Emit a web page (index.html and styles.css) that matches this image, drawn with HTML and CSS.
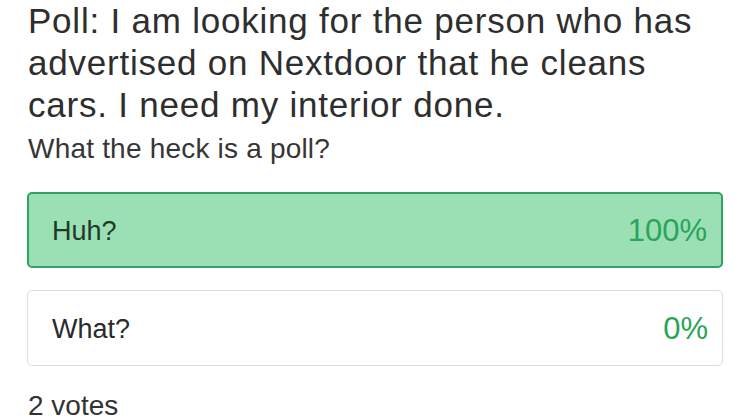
FILE: index.html
```html
<!DOCTYPE html>
<html lang="en">

<head>
    <meta charset="UTF-8">
    <meta name="viewport" content="width=device-width, initial-scale=1.0">
    <title>Poll</title>
    <link rel="stylesheet" href="styles.css">
</head>

<body>

    <div class="poll">
        <h1 class="poll-title">Poll: I am looking for the person who has advertised on Nextdoor that he cleans cars. I need my interior done.</h1>
        <p class="poll-question">What the heck is a poll?</p>

        <div class="option winner">
            <span class="option-label">Huh?</span>
            <span class="option-percent">100%</span>
        </div>
        <div class="option">
            <span class="option-label">What?</span>
            <span class="option-percent">0%</span>
        </div>

        <p class="poll-votes">2 votes</p>
    </div>

</body>

</html>
```

FILE: styles.css
```css
body {
    margin: 0;
    font-family: "Liberation Sans", Arial, sans-serif;
    background-color: #fff;
    color: #2e2e2e;
}

.poll {
    padding: 0 25px 0 27px;
}

.poll-title {
    margin: 0;
    font-size: 35px;
    font-weight: normal;
    line-height: 42px;
    letter-spacing: 0.78px;
    padding-left: 1px;
}

.poll-question {
    margin: 6px 0 26px;
    font-size: 28px;
    line-height: 34px;
    letter-spacing: 0.2px;
    color: #363636;
    padding-left: 1px;
}

.option {
    display: flex;
    justify-content: space-between;
    align-items: center;
    height: 76px;
    box-sizing: border-box;
    margin-bottom: 22px;
    padding: 2px 14px 0 24px;
    border: 1px solid #d6e0dd;
    border-radius: 5px;
    background-color: #fff;
}

.option.winner {
    border: 2px solid #33a160;
    background-color: #9ae0b4;
    padding-left: 23px;
    padding-right: 14px;
}

.option-label {
    font-size: 27px;
    color: #2a2a2a;
}

.winner .option-label {
    color: #1f3a29;
}

.option-percent {
    font-size: 31px;
    color: #2aa45a;
}

.poll-votes {
    margin: 23px 0 0;
    font-size: 28px;
    line-height: 34px;
    color: #333;
    padding-left: 1px;
}
```
